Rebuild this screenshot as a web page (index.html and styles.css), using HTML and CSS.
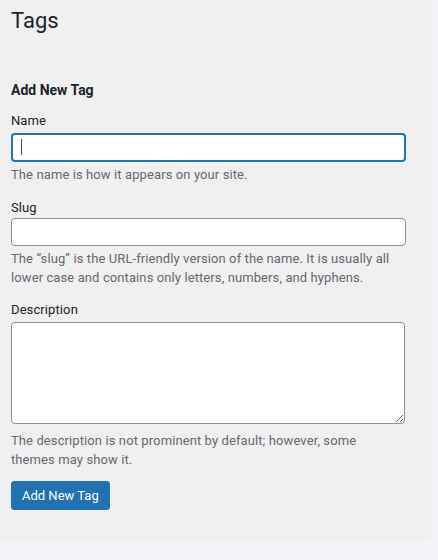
FILE: index.html
```html
<!DOCTYPE html>
<html lang="en">
<head>
<meta charset="utf-8">
<title>Tags</title>
<link rel="stylesheet" href="styles.css">
</head>
<body>
<div class="panel">
  <h1 class="title">Tags</h1>
  <h2 class="subtitle">Add New Tag</h2>
  <form class="form">
    <div class="field">
      <label class="label" for="tag-name">Name</label>
      <div class="input-wrap">
        <input class="input input-focus" id="tag-name" type="text">
        <span class="caret"></span>
      </div>
      <p class="help">The name is how it appears on your site.</p>
    </div>
    <div class="field field-slug">
      <label class="label" for="tag-slug">Slug</label>
      <input class="input input-slug" id="tag-slug" type="text">
      <p class="help">The “slug” is the URL-friendly version of the name. It is usually all lower case and contains only letters, numbers, and hyphens.</p>
    </div>
    <div class="field field-desc">
      <label class="label label-desc" for="tag-desc">Description</label>
      <textarea class="textarea" id="tag-desc"></textarea>
      <p class="help help-desc">The description is not prominent by default; however, some themes may show it.</p>
    </div>
    <button class="button" type="button">Add New Tag</button>
  </form>
</div>
</body>
</html>
```
FILE: styles.css
```css
html, body {
  margin: 0;
  padding: 0;
}
body {
  background: #f2f3f6;
  font-family: Roboto, "Noto Sans", "Liberation Sans", sans-serif;
  color: #1d2327;
  font-size: 13px;
  letter-spacing: 0.1px;
}
.panel {
  box-sizing: border-box;
  width: 431px;
  height: 540px;
  background: #f0f0f1;
  padding: 0 0 0 11px;
  overflow: hidden;
}
.title {
  margin: 0;
  padding-top: 6px;
  font-size: 22px;
  line-height: 30px;
  font-weight: 400;
  letter-spacing: 0;
  color: #1d2327;
}
.subtitle {
  margin: 44px 0 0;
  font-size: 14px;
  line-height: 20px;
  font-weight: 700;
  letter-spacing: 0;
  color: #1d2327;
}
.form {
  width: 395px;
}
.field {
  display: flex;
  flex-direction: column;
}
.label {
  display: block;
  margin-top: 12px;
  line-height: 18px;
  font-size: 13px;
  color: #1d2327;
}
.field-slug .label {
  margin-top: 15px;
}
.label-desc {
  margin-top: 14px;
}
.input-wrap {
  position: relative;
  margin-top: 3px;
}
.input {
  display: block;
  box-sizing: border-box;
  width: 395px;
  height: 28px;
  margin: 0;
  padding: 0 8px;
  border: 1px solid #8c8f94;
  border-radius: 4px;
  background: #fff;
  font: inherit;
  outline: none;
}
.input-focus {
  height: 29px;
  border: 2px solid #2271b1;
}
.input-slug {
  margin-top: 1px;
}
.caret {
  position: absolute;
  left: 10px;
  top: 6px;
  width: 1px;
  height: 16px;
  background: #3c434a;
}
.help {
  max-width: 388px;
  margin: 3px 0 0;
  font-size: 13px;
  line-height: 19px;
  color: #646970;
}
.textarea {
  display: block;
  box-sizing: border-box;
  width: 394px;
  height: 102px;
  margin: 3px 0 0;
  padding: 2px 6px;
  border: 1px solid #8c8f94;
  border-radius: 4px;
  background: #fff;
  font: inherit;
  outline: none;
  resize: vertical;
}
.help-desc {
  margin-top: 7px;
}
.button {
  display: block;
  margin-top: 12px;
  box-sizing: border-box;
  height: 29px;
  padding: 0 10px;
  border: 1px solid #2271b1;
  border-radius: 3px;
  background: #2271b1;
  color: #fff;
  font: inherit;
  font-size: 13px;
  line-height: 27px;
}
```
